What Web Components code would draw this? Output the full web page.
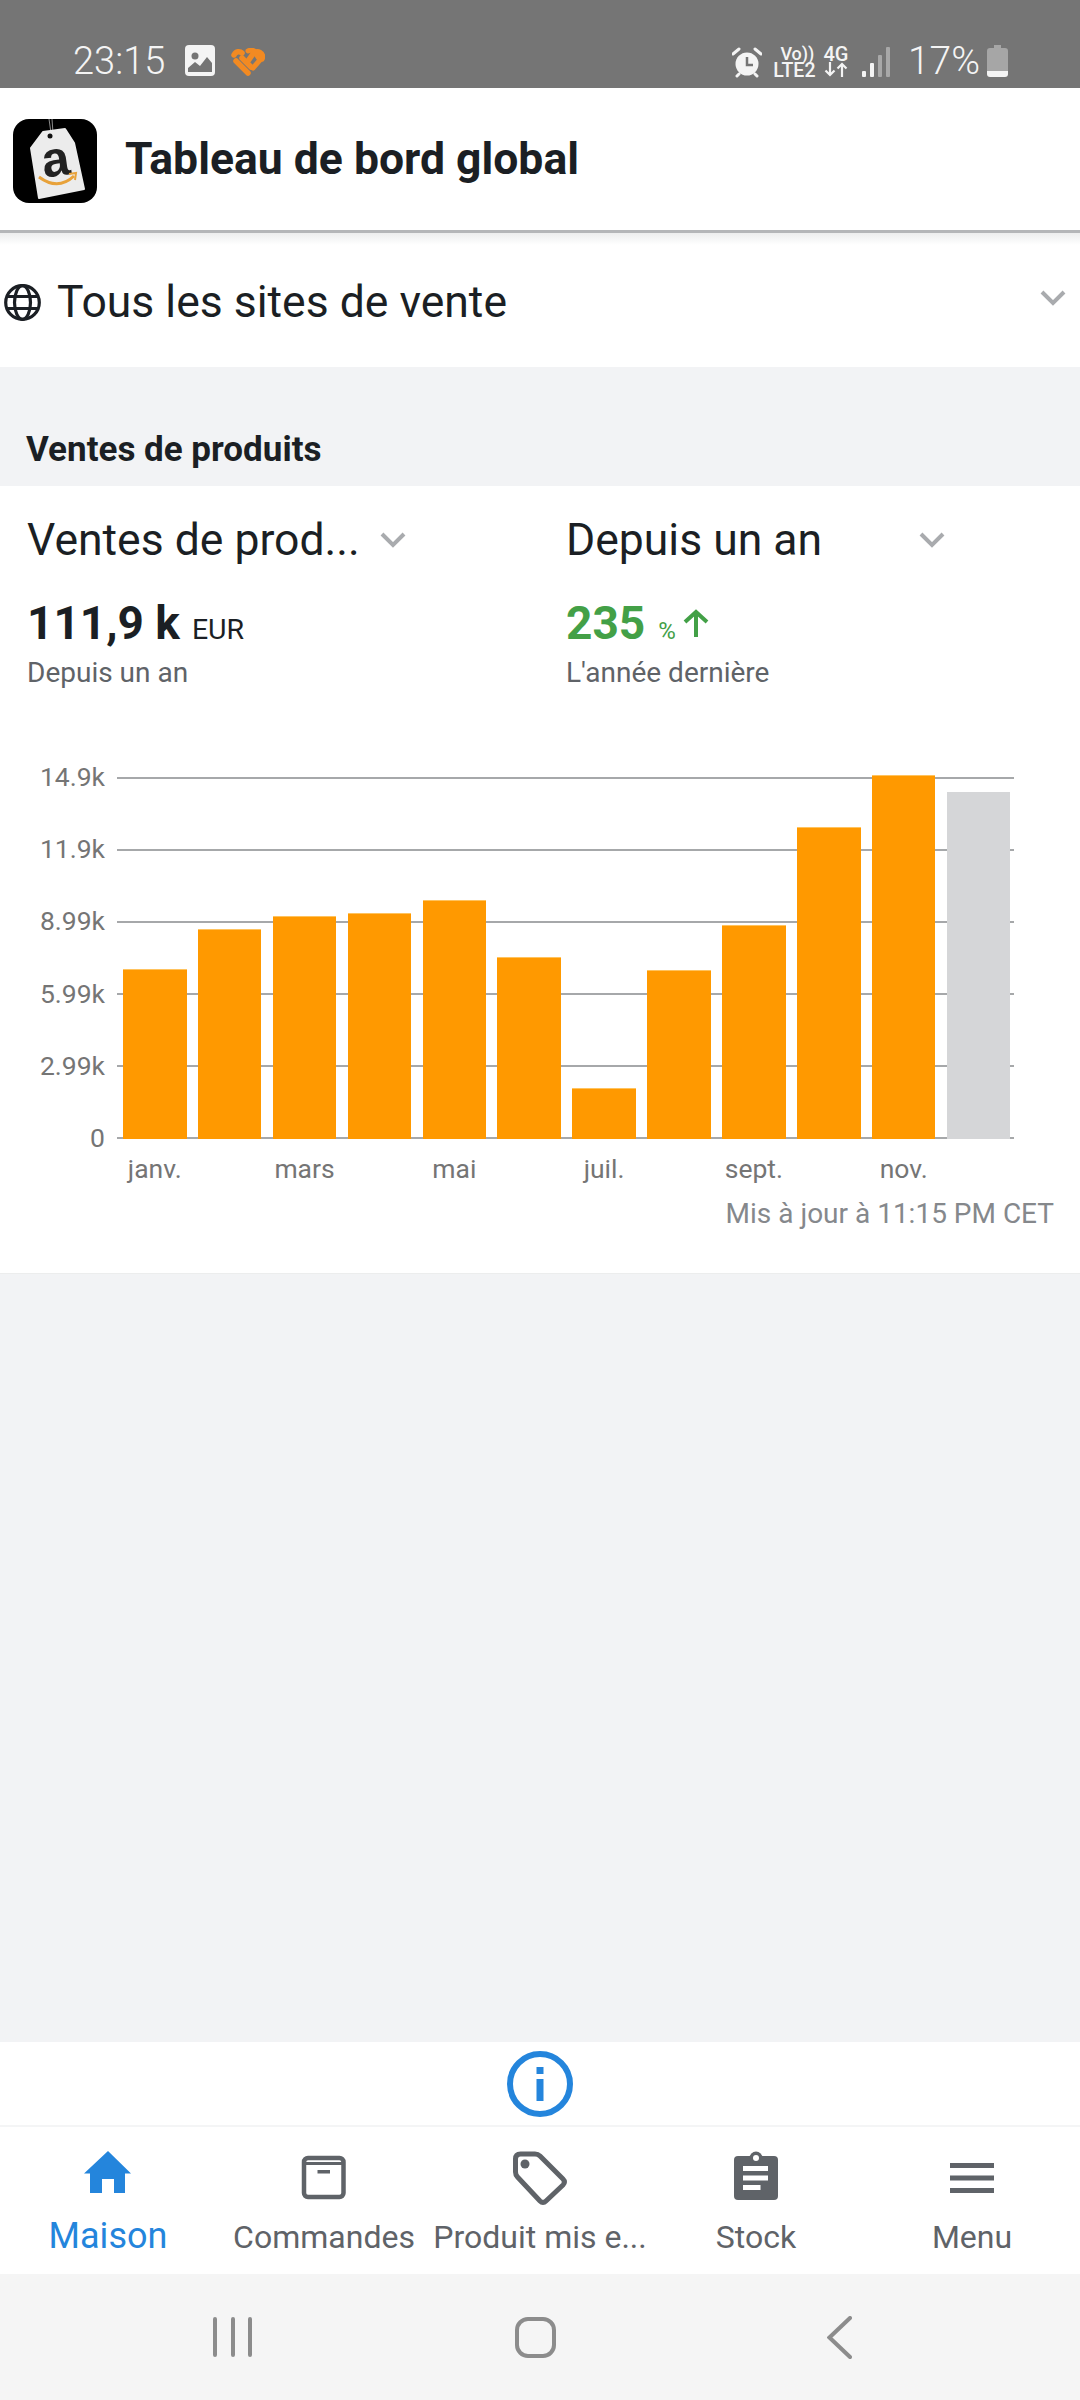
<!DOCTYPE html>
<html lang="fr">
<head>
<meta charset="UTF-8">
<title>Tableau de bord global</title>
<style>
  html, body { margin: 0; background: #f2f3f5; }
  body { width: 1080px; height: 2400px; display: flex; flex-direction: column; overflow: hidden; font-family: Roboto, "Liberation Sans", sans-serif; color: #1b1f24; }
  main-space { flex: 1; display: block; }
</style>
</head>
<body>
<status-bar></status-bar>
<app-header>Tableau de bord global</app-header>
<market-select>Tous les sites de vente</market-select>
<section-title>Ventes de produits</section-title>
<sales-card></sales-card>
<main-space></main-space>
<info-strip></info-strip>
<bottom-nav>
  <nav-item active label="Maison"><svg viewBox="0 0 60 60"><path fill="#2485dc" d="M30 4 53 26.5H47V46H36V32H24V46H12V26.5H6Z"/></svg></nav-item>
  <nav-item label="Commandes"><svg viewBox="0 0 60 60"><rect x="10" y="11" width="39.500" height="39" rx="4" fill="none" stroke="#5f6368" stroke-width="4.500"/><path d="M10 16.500H49.500" stroke="#5f6368" stroke-width="3"/><rect x="23.500" y="23" width="12.500" height="3.500" fill="#5f6368"/></svg></nav-item>
  <nav-item label="Produit mis e..."><svg viewBox="0 0 60 60"><path fill="none" stroke="#5f6368" stroke-width="5" stroke-linejoin="round" d="M5.500 12Q5.500 7 10.500 7H25Q28 7 30 9L53 32Q56 35 53 38L36 54Q33 57 30 54L7.500 30Q5.500 28 5.500 25Z"/><circle cx="15" cy="17" r="4.500" fill="#5f6368"/></svg></nav-item>
  <nav-item label="Stock"><svg viewBox="0 0 60 60"><rect x="8" y="9" width="44" height="44" rx="4" fill="#5f6368"/><circle cx="30" cy="11" r="6.500" fill="#5f6368"/><circle cx="30" cy="11" r="3" fill="#fff"/><path d="M17 19h25v5H17zM17 28.500h25v5H17zM17 38h17.500v5H17z" fill="#fff"/></svg></nav-item>
  <nav-item label="Menu"><svg viewBox="0 0 60 60"><path d="M8 16h44v5H8zM8 28.500h44v5H8zM8 41h44v5H8z" fill="#5f6368"/></svg></nav-item>
</bottom-nav>
<system-nav></system-nav>

<script>
  class StatusBar extends HTMLElement {
    constructor() {
      super();
      this.attachShadow({ mode: 'open' }).innerHTML = `
        <style>
          :host { display: flex; height: 88px; box-sizing: border-box; background: #757575; color: #f4f4f4; align-items: flex-start; padding: 45px 0 0 73px; }
          svg { display: block; flex: none; }
          .time { font-size: 38px; line-height: 32px; font-weight: 300; width: 95px; margin-right: 17px; white-space: nowrap; }
          .heart { margin: 3px 0 0 16px; }
          .right { margin-left: auto; display: flex; align-items: flex-start; }
          .stack { display: flex; flex-direction: column; align-items: center; font-weight: 500; color: #f4f4f4; }
          .vo { font-size: 18px; line-height: 16px; margin-left: 6px; white-space: nowrap; }
          .lte { font-size: 19.500px; line-height: 17px; white-space: nowrap; }
          .g { font-size: 20px; line-height: 16px; white-space: nowrap; }
          .pct { font-size: 39px; line-height: 32px; font-weight: 300; margin-left: 18px; white-space: nowrap; }
        </style>
        <span class="time">23:15</span>
        <svg width="30" height="31" viewBox="0 0 30 31"><rect width="30" height="31" rx="4" fill="#f4f4f4"/><circle cx="10" cy="11" r="3.500" fill="#757575"/><path d="M3 27V23L10 17 15 21 22 12 27 18V27Z" fill="#757575"/></svg>
        <svg class="heart" width="34" height="28" viewBox="0 0 34 28" fill="none" stroke="#f28a22" stroke-width="5.500" stroke-linecap="round"><path d="M3 7C5 3 9 3 11 5"/><path d="M5 13 17 25"/><path d="M11 10 20 19"/><path d="M17 3C21 1 25 3 25 6L29 12 22 20" stroke-width="5"/><path d="M17 13 22 6C26 1 33 5 31 11"/></svg>
        <div class="right">
          <svg width="30" height="31" viewBox="0 0 30 31" style="margin-top:2px"><circle cx="15" cy="17" r="11.500" fill="#f4f4f4"/><path d="M1 7 7 2M29 7 23 2M5 29 7 27M25 29 23 27" stroke="#f4f4f4" stroke-width="3" stroke-linecap="round"/><path d="M15 10V18H21" fill="none" stroke="#757575" stroke-width="2.500"/></svg>
          <div class="stack" style="width:41px;margin:1px 0 0 12px"><span class="vo">Vo))</span><span class="lte">LTE2</span></div>
          <div class="stack" style="width:24px;margin:1px 0 0 9px"><span class="g">4G</span>
            <svg width="24" height="15" viewBox="0 0 24 15" fill="none" stroke="#f4f4f4" stroke-width="2.200"><path d="M6 0V13M1.500 8.500 6 13 10.500 8.500M18 15V2M13.500 6.500 18 2 22.500 6.500"/></svg>
          </div>
          <svg width="28" height="30" viewBox="0 0 28 30" style="margin:2px 0 0 14px"><rect x="0" y="24" width="4" height="6" rx="1" fill="#f4f4f4"/><rect x="8" y="16" width="4" height="14" rx="1" fill="#f4f4f4"/><rect x="16" y="8" width="4" height="22" rx="1" fill="#a8a8a8"/><rect x="24" y="0" width="4" height="30" rx="1" fill="#a8a8a8"/></svg>
          <span class="pct">17%</span>
          <svg width="21" height="32" viewBox="0 0 21 32" style="margin:0 72px 0 7px"><path d="M7 0H14V3H18Q21 3 21 6V26H0V6Q0 3 3 3H7Z" fill="#a6a6a6"/><path d="M0 26H21V29Q21 32 18 32H3Q0 32 0 29Z" fill="#f4f4f4"/></svg>
        </div>`;
    }
  }

  class AppHeader extends HTMLElement {
    constructor() {
      super();
      this.attachShadow({ mode: 'open' }).innerHTML = `
        <style>
          :host { display: flex; align-items: center; height: 145px; box-sizing: border-box; background: #fff; padding: 0 0 0 13px; border-bottom: 3px solid #b4b6b8; font-size: 44.500px; font-weight: 700; }
          svg { display: block; margin-right: 28px; flex: none; margin-top: 3px; }
          span { margin-top: -1px; }
        </style>
        <svg width="84" height="84" viewBox="0 0 84 84">
          <rect width="84" height="84" rx="16" fill="#000"/>
          <path d="M36 0 38 14M39 0 40 14" stroke="#8b8b8b" stroke-width="1"/>
          <path d="M18 29 30 13 52 10 61 24 71 70 26 79Z" fill="#ececec" stroke="#ececec" stroke-width="2" stroke-linejoin="round"/>
          <circle cx="37" cy="17" r="2.500" fill="#111"/>
          <text x="43" y="57" font-family="Liberation Sans, sans-serif" font-weight="700" font-size="50" text-anchor="middle" fill="#222" transform="rotate(-8 43 45)">a</text>
          <path d="M26 58Q45 72 61 57" fill="none" stroke="#e8a23a" stroke-width="3"/>
          <path d="M56 55 63 54 62 61" fill="none" stroke="#e8a23a" stroke-width="2"/>
        </svg>
        <span><slot></slot></span>`;
    }
  }

  class ChevronDown extends HTMLElement {
    constructor() {
      super();
      this.attachShadow({ mode: 'open' }).innerHTML = `
        <style>:host { display: block; width: 26px; height: 16px; flex: none; } svg { display: block; }</style>
        <svg width="26" height="16" viewBox="0 0 26 16"><path d="M2 2 13 13 24 2" fill="none" stroke="#a9abae" stroke-width="4"/></svg>`;
    }
  }
  customElements.define('chevron-down', ChevronDown);

  class MarketSelect extends HTMLElement {
    constructor() {
      super();
      this.attachShadow({ mode: 'open' }).innerHTML = `
        <style>
          :host { display: flex; align-items: center; height: 134px; box-sizing: border-box; background: linear-gradient(#eceded, #fff 12px); padding: 4px 0 0 4px; font-size: 44.500px; }
          svg { display: block; margin-right: 16px; flex: none; }
          chevron-down { margin-left: auto; margin-right: 14px; margin-top: -8px; }
          span { white-space: nowrap; }
        </style>
        <svg width="37" height="37" viewBox="0 0 37 37" fill="none" stroke="#1b1f24" stroke-width="3.200"><circle cx="18.500" cy="18.500" r="16.800"/><ellipse cx="18.500" cy="18.500" rx="8" ry="16.800"/><path d="M3 12.500H34M3 24.500H34"/></svg>
        <span><slot></slot></span>
        <chevron-down></chevron-down>`;
    }
  }

  class SectionTitle extends HTMLElement {
    constructor() {
      super();
      this.attachShadow({ mode: 'open' }).innerHTML = `
        <style>:host { display: block; height: 119px; box-sizing: border-box; background: #f2f3f5; padding: 62px 0 0 26px; font-size: 35px; line-height: 41px; font-weight: 700; }</style>
        <slot></slot>`;
    }
  }

  class MetricPicker extends HTMLElement {
    constructor() {
      super();
      this.attachShadow({ mode: 'open' }).innerHTML = `
        <style>
          :host { display: block; }
          .pick { display: flex; align-items: center; height: 52px; font-size: 44.500px; line-height: 52px; white-space: nowrap; }
          .pick span { width: 353px; }
          .value { display: flex; align-items: baseline; height: 54px; margin-top: 30px; line-height: 54px; white-space: nowrap; }
          .sub { font-size: 28px; line-height: 34px; color: #5f6368; margin-top: 6px; white-space: nowrap; }
        </style>
        <div class="pick"><span><slot name="pick"></slot></span><chevron-down></chevron-down></div>
        <div class="value"><slot name="value"></slot></div>
        <div class="sub"><slot name="sub"></slot></div>`;
    }
  }
  customElements.define('metric-picker', MetricPicker);

  class BarChart extends HTMLElement {
    constructor() {
      super();
      const ticks = ['14.9k', '11.9k', '8.99k', '5.99k', '2.99k', '0'];
      const tops = [989, 949, 936, 933, 920, 977, 1108, 990, 945, 847, 795, 812];
      const months = ['janv.', '', 'mars', '', 'mai', '', 'juil.', '', 'sept.', '', 'nov.', ''];
      this.attachShadow({ mode: 'open' }).innerHTML = `
        <style>
          :host { display: grid; grid-template-columns: 105px 897px; column-gap: 12px; color: #757575; font-size: 26.500px; }
          .labels { height: 361px; display: flex; flex-direction: column; justify-content: space-between; text-align: right; line-height: 0; }
          .plot { position: relative; height: 361px; }
          .lines { height: 100%; display: flex; flex-direction: column; justify-content: space-between; }
          .lines i { display: block; height: 2px; margin-bottom: -1px; background: #a6a8aa; }
          .bars { position: absolute; left: 6px; bottom: -1px; display: flex; align-items: flex-end; gap: 11.400px; }
          .bars i { display: block; width: 63.500px; background: #ff9900; border-top: 1px solid #ffc35e; box-sizing: border-box; }
          .bars i.cur { background: #d5d6d8; border-top-color: #d5d6d8; }
          .months { grid-column: 2; display: flex; gap: 11.400px; padding-left: 6px; margin-top: 14px; line-height: 34px; }
          .months span { width: 63.500px; flex: none; display: flex; justify-content: center; white-space: nowrap; }
        </style>
        <div class="labels">${ticks.map(t => `<span>${t}</span>`).join('')}</div>
        <div class="plot">
          <div class="lines">${ticks.map(() => '<i></i>').join('')}</div>
          <div class="bars">${tops.map((t, i) => `<i class="${i === 11 ? 'cur' : ''}" style="height:${1159 - t}px"></i>`).join('')}</div>
        </div>
        <div class="months">${months.map(m => `<span>${m}</span>`).join('')}</div>`;
    }
  }
  customElements.define('bar-chart', BarChart);

  class SalesCard extends HTMLElement {
    constructor() {
      super();
      this.attachShadow({ mode: 'open' }).innerHTML = `
        <style>
          :host { display: block; height: 788px; box-sizing: border-box; background: #fff; border-bottom: 1px solid #eceded; }
          .metrics { display: flex; padding: 28px 0 0 27px; height: 308px; box-sizing: border-box; }
          metric-picker { width: 539px; flex: none; }
          .big { font-size: 46px; font-weight: 700; }
          .eur { font-size: 28.500px; margin-left: 12px; }
          .up { color: #43a047; }
          .pc { font-size: 24px; margin-left: 13px; }
          .up svg { margin-left: 5px; align-self: flex-end; margin-bottom: 9px; }
          .up-arrow { display: block; margin-left: 6px; align-self: center; }
          bar-chart { margin-top: -17px; }
          .updated { text-align: right; padding-right: 26px; margin-top: 11px; font-size: 28px; line-height: 34px; color: #85888c; white-space: nowrap; }
        </style>
        <div class="metrics">
          <metric-picker>
            <span slot="pick">Ventes de prod...</span>
            <span slot="value" class="big">111,9 k</span><span slot="value" class="eur">EUR</span>
            <span slot="sub">Depuis un an</span>
          </metric-picker>
          <metric-picker>
            <span slot="pick">Depuis un an</span>
            <span slot="value" class="big up">235</span><span slot="value" class="pc up">%</span>
            <svg slot="value" class="up-arrow" width="28" height="28" viewBox="0 0 28 28" fill="none" stroke="#43a047" stroke-width="4"><path d="M14 28V3M3 13 14 3 25 13"/></svg>
            <span slot="sub">L'année dernière</span>
          </metric-picker>
        </div>
        <bar-chart></bar-chart>
        <div class="updated">Mis à jour à 11:15 PM CET</div>`;
    }
  }

  class InfoStrip extends HTMLElement {
    constructor() {
      super();
      this.attachShadow({ mode: 'open' }).innerHTML = `
        <style>
          :host { display: flex; justify-content: center; align-items: center; height: 85px; box-sizing: border-box; background: #fff; border-bottom: 2px solid #f4f5f6; }
          svg { display: block; }
        </style>
        <svg width="66" height="66" viewBox="0 0 66 66"><circle cx="33" cy="33" r="30" fill="none" stroke="#2485dc" stroke-width="6"/><rect x="29.500" y="16" width="7" height="7" fill="#2485dc"/><rect x="29.500" y="28" width="7" height="22" fill="#2485dc"/></svg>`;
    }
  }

  class BottomNav extends HTMLElement {
    constructor() {
      super();
      this.attachShadow({ mode: 'open' }).innerHTML = `
        <style>:host { display: grid; grid-template-columns: repeat(5, 216px); height: 147px; background: #fff; }</style>
        <slot></slot>`;
    }
  }

  class NavItem extends HTMLElement {
    constructor() {
      super();
      const active = this.hasAttribute('active');
      this.attachShadow({ mode: 'open' }).innerHTML = `
        <style>
          :host { display: flex; flex-direction: column; align-items: center; padding-top: 20px; box-sizing: border-box; min-width: 0; }
          .icon { width: 60px; height: 60px; }
          ::slotted(svg) { display: block; width: 60px; height: 60px; }
          .label { font-size: ${active ? 36 : 32}px; line-height: 38px; margin-top: ${active ? 10 : 11}px; color: ${active ? '#2485dc' : '#5f6368'}; white-space: nowrap; }
        </style>
        <div class="icon"><slot></slot></div>
        <div class="label">${this.getAttribute('label')}</div>`;
    }
  }

  class SystemNav extends HTMLElement {
    constructor() {
      super();
      this.attachShadow({ mode: 'open' }).innerHTML = `
        <style>
          :host { display: grid; grid-template-columns: repeat(3, 1fr); grid-template-columns: 466px 179px 1fr; height: 126px; background: #f5f5f5; align-items: start; padding-top: 43px; box-sizing: border-box; }
          svg { display: block; }
          .recent { margin-left: 212px; }
          .home { margin-left: 49px; }
          .back { margin-left: 182px; margin-top: -1px; }
        </style>
        <svg class="recent" width="40" height="40" viewBox="0 0 40 40" stroke="#8c8c8c" stroke-width="4" stroke-linecap="round"><path d="M3 2V38M21 2V38M38 2V38"/></svg>
        <svg class="home" width="41" height="41" viewBox="0 0 41 41"><rect x="2" y="2" width="37" height="37" rx="11" fill="none" stroke="#8c8c8c" stroke-width="4"/></svg>
        <svg class="back" width="25" height="43" viewBox="0 0 25 43"><path d="M23 2 2.500 21.500 23 41" fill="none" stroke="#8c8c8c" stroke-width="4" stroke-linecap="round"/></svg>`;
    }
  }

  customElements.define('status-bar', StatusBar);
  customElements.define('app-header', AppHeader);
  customElements.define('market-select', MarketSelect);
  customElements.define('section-title', SectionTitle);
  customElements.define('sales-card', SalesCard);
  customElements.define('info-strip', InfoStrip);
  customElements.define('bottom-nav', BottomNav);
  customElements.define('nav-item', NavItem);
  customElements.define('system-nav', SystemNav);
</script>
</body>
</html>
